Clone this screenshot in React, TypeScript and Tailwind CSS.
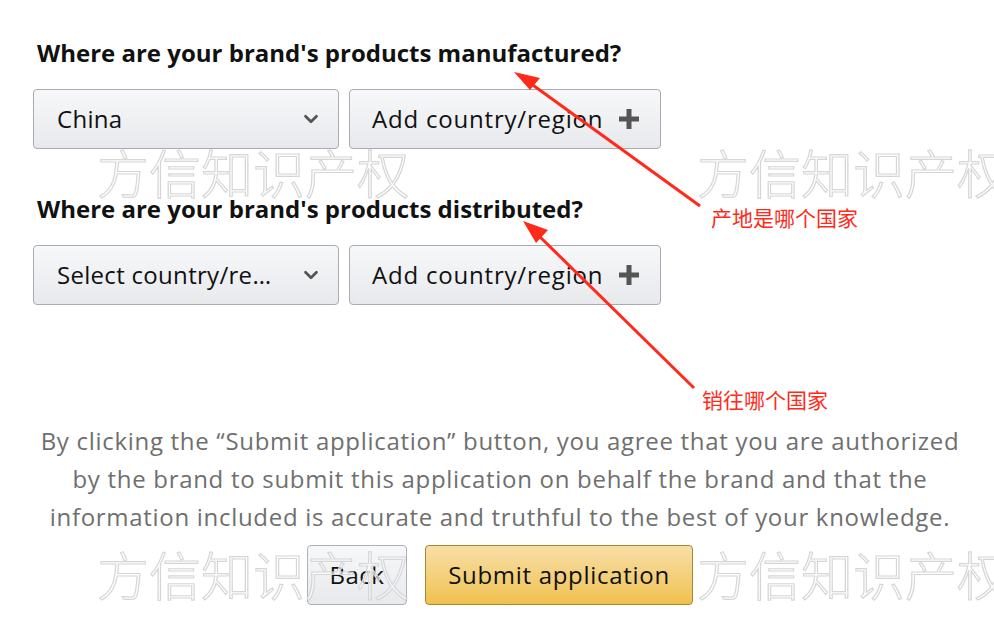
import { ChevronDown } from 'lucide-react'

function Watermark({ className }: { className: string }) {
  return (
    <div
      className={`absolute z-10 whitespace-nowrap pointer-events-none select-none text-[52px] leading-none font-light text-white/60 [-webkit-text-stroke:1.2px_#d6d6d6] font-['Noto_Sans_CJK_SC',sans-serif] ${className}`}
    >
      方信知识产权
    </div>
  )
}

function PlusIcon() {
  return (
    <svg width="20" height="20" viewBox="0 0 20 20" className="shrink-0">
      <rect x="7.5" y="0" width="5" height="20" fill="#555" />
      <rect x="0" y="7.5" width="20" height="5" fill="#555" />
    </svg>
  )
}

function CountryRow({ value }: { value: string }) {
  return (
    <div className="flex gap-[10px]">
      <div className="w-[306px] h-[60px] rounded-[4px] border border-[#a9abaf] bg-gradient-to-b from-[#f7f8fa] to-[#e7e9ec] flex items-center pl-[23px] pr-[16px] text-[24px] tracking-[0.3px] text-[#111]">
        <span className="flex-1 truncate">{value}</span>
        <ChevronDown size={22} strokeWidth={3} color="#555" />
      </div>
      <div className="w-[312px] h-[60px] rounded-[4px] border border-[#a9abaf] bg-gradient-to-b from-[#f7f8fa] to-[#e7e9ec] flex items-center pl-[22px] pr-[21px] text-[24px] tracking-[0.8px] text-[#111]">
        <span className="flex-1">Add country/region</span>
        <PlusIcon />
      </div>
    </div>
  )
}

export default function App() {
  return (
    <div className="relative w-[994px] h-[626px] bg-white overflow-hidden font-['Open_Sans',sans-serif]">
      <Watermark className="left-[97px] top-[146px]" />
      <Watermark className="left-[697px] top-[146px]" />

      <div className="relative pl-[33px] pt-[38px]">
        <h2 className="pl-[4px] text-[24px] leading-[30px] font-bold text-[#111]">
          Where are your brand's products manufactured?
        </h2>
        <div className="mt-[21px]">
          <CountryRow value="China" />
        </div>
        <h2 className="mt-[45px] pl-[4px] text-[24px] leading-[30px] font-bold text-[#111]">
          Where are your brand's products distributed?
        </h2>
        <div className="mt-[21px]">
          <CountryRow value="Select country/re…" />
        </div>

        <p className="mt-[117px] w-[934px] text-center text-[24px] tracking-[0.7px] leading-[38px] text-[#6f6f6f]">
          By clicking the “Submit application” button, you agree that you are authorized
          <br />
          by the brand to submit this application on behalf the brand and that the
          <br />
          information included is accurate and truthful to the best of your knowledge.
        </p>

        <div className="relative w-[934px] mt-[9px] flex justify-center gap-[18px]">
          <Watermark className="left-[64px] top-[3px]" />
          <Watermark className="left-[664px] top-[3px]" />
          <button className="w-[100px] h-[60px] rounded-[4px] border border-[#adb1b8] bg-gradient-to-b from-[#f7f8fa] to-[#e7e9ec] text-[24px] tracking-[0.5px] text-[#111]">
            Back
          </button>
          <button className="w-[268px] h-[60px] rounded-[4px] border border-[#a88734] bg-gradient-to-b from-[#f7dfa5] to-[#f0c14b] text-[24px] tracking-[0.7px] text-[#111]">
            Submit application
          </button>
        </div>
      </div>

      {/* annotation arrows */}
      <svg className="absolute inset-0 z-20 pointer-events-none" width="994" height="626">
        <line x1="530" y1="83" x2="700" y2="206" stroke="#ff2a1a" strokeWidth="3" />
        <polygon points="514,72 540,78 530,90" fill="#ff2a1a" />
        <line x1="536" y1="233" x2="694" y2="388" stroke="#ff2a1a" strokeWidth="3" />
        <polygon points="523,221 548,230 536,243" fill="#ff2a1a" />
      </svg>
      <div className="absolute z-20 left-[711px] top-[203px] whitespace-nowrap text-[21px] leading-[28px] text-[#ff2a1a] font-['Noto_Sans_CJK_SC',sans-serif]">
        产地是哪个国家
      </div>
      <div className="absolute z-20 left-[702px] top-[385px] whitespace-nowrap text-[21px] leading-[28px] text-[#ff2a1a] font-['Noto_Sans_CJK_SC',sans-serif]">
        销往哪个国家
      </div>
    </div>
  )
}
